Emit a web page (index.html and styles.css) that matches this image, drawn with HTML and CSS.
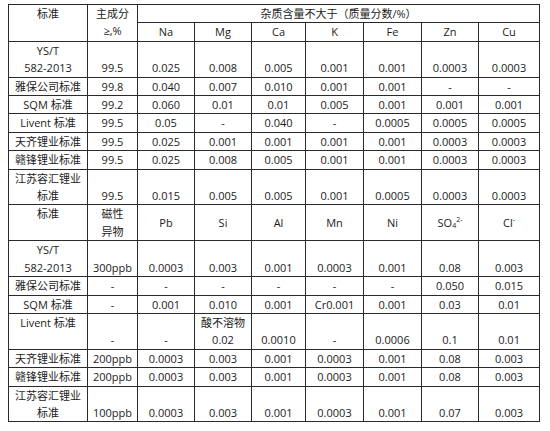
FILE: index.html
```html
<!DOCTYPE html>
<html lang="zh">
<head>
<meta charset="utf-8">
<link rel="stylesheet" href="styles.css">
</head>
<body>
<table class="spec">
  <colgroup>
    <col class="c-name"><col class="c-main"><col class="c57"><col class="c57"><col class="c54"><col class="c58"><col class="c58"><col class="c57"><col class="c61">
  </colgroup>
  <tbody>
    <tr>
      <td rowspan="2" class="top">标准</td>
      <td rowspan="2" class="top">主成分<br>≥,%</td>
      <td colspan="7">杂质含量不大于（质量分数/%）</td>
    </tr>
    <tr><td>Na</td><td>Mg</td><td>Ca</td><td>K</td><td>Fe</td><td>Zn</td><td>Cu</td></tr>
    <tr class="bot"><td class="top">YS/T<br>582-2013</td><td>99.5</td><td>0.025</td><td>0.008</td><td>0.005</td><td>0.001</td><td>0.001</td><td>0.0003</td><td>0.0003</td></tr>
    <tr><td>雅保公司标准</td><td>99.8</td><td>0.040</td><td>0.007</td><td>0.010</td><td>0.001</td><td>0.001</td><td>-</td><td>-</td></tr>
    <tr><td>SQM 标准</td><td>99.2</td><td>0.060</td><td>0.01</td><td>0.01</td><td>0.005</td><td>0.001</td><td>0.001</td><td>0.001</td></tr>
    <tr><td>Livent 标准</td><td>99.5</td><td>0.05</td><td>-</td><td>0.040</td><td>-</td><td>0.0005</td><td>0.0005</td><td>0.0005</td></tr>
    <tr class="gray"><td>天齐锂业标准</td><td>99.5</td><td>0.025</td><td>0.001</td><td>0.001</td><td>0.001</td><td>0.001</td><td>0.0003</td><td>0.0003</td></tr>
    <tr><td>赣锋锂业标准</td><td>99.5</td><td>0.025</td><td>0.008</td><td>0.005</td><td>0.001</td><td>0.001</td><td>0.0003</td><td>0.0003</td></tr>
    <tr class="bot"><td class="top">江苏容汇锂业<br>标准</td><td>99.5</td><td>0.015</td><td>0.005</td><td>0.005</td><td>0.001</td><td>0.0005</td><td>0.0003</td><td>0.0003</td></tr>

    <tr class="split"><td class="top">标准</td><td>磁性<br>异物</td><td>Pb</td><td>Si</td><td>Al</td><td>Mn</td><td>Ni</td><td>SO<sub>4</sub><sup>2-</sup></td><td>Cl<sup>-</sup></td></tr>
    <tr class="bot"><td class="top">YS/T<br>582-2013</td><td>300ppb</td><td>0.0003</td><td>0.003</td><td>0.001</td><td>0.0003</td><td>0.001</td><td>0.08</td><td>0.003</td></tr>
    <tr><td>雅保公司标准</td><td>-</td><td>-</td><td>-</td><td>-</td><td>-</td><td>-</td><td>0.050</td><td>0.015</td></tr>
    <tr><td>SQM 标准</td><td>-</td><td>0.001</td><td>0.010</td><td>0.001</td><td>Cr0.001</td><td>0.001</td><td>0.03</td><td>0.01</td></tr>
    <tr class="bot gray"><td class="top">Livent 标准</td><td>-</td><td>-</td><td>酸不溶物<br>0.02</td><td>0.0010</td><td>-</td><td>0.0006</td><td>0.1</td><td>0.01</td></tr>
    <tr class="gray"><td>天齐锂业标准</td><td>200ppb</td><td>0.0003</td><td>0.003</td><td>0.001</td><td>0.0003</td><td>0.001</td><td>0.08</td><td>0.003</td></tr>
    <tr><td>赣锋锂业标准</td><td>200ppb</td><td>0.0003</td><td>0.003</td><td>0.001</td><td>0.0003</td><td>0.001</td><td>0.08</td><td>0.003</td></tr>
    <tr class="bot"><td class="top">江苏容汇锂业<br>标准</td><td>100ppb</td><td>0.0003</td><td>0.003</td><td>0.001</td><td>0.0003</td><td>0.001</td><td>0.07</td><td>0.003</td></tr>
  </tbody>
</table>
</body>
</html>
```

FILE: styles.css
```css
html, body {
  background: #ffffff;
}
body {
  margin: 4px 0 0 8px;
  font-family: "Open Sans", "Noto Sans CJK SC", sans-serif;
  font-size: 11px;
  color: #1c1c1c;
}
.spec {
  border-collapse: collapse;
  table-layout: fixed;
  width: 532px;
}
.c-name { width: 79px; }
.c-main { width: 50px; }
.c57 { width: 57px; }
.c54 { width: 54px; }
.c58 { width: 58px; }
.c61 { width: 61px; }
.spec td {
  border: 1px solid #2a2a2a;
  padding: 0;
  line-height: 17.4px;
  height: 17.4px;
  text-align: center;
  vertical-align: middle;
  white-space: nowrap;
  overflow: hidden;
}
.spec tr.bot td {
  vertical-align: bottom;
}
.spec td.top,
.spec tr.bot td.top {
  vertical-align: top;
}
.spec tr.gray td {
  border-top-color: #7a7a7a;
}
.spec tr.split td {
  border-top-color: #6a6a6a;
}
.spec sub,
.spec sup {
  font-size: 7px;
  line-height: 0;
}
.spec sub {
  vertical-align: -1px;
}
.spec sup {
  vertical-align: 5px;
}
```
